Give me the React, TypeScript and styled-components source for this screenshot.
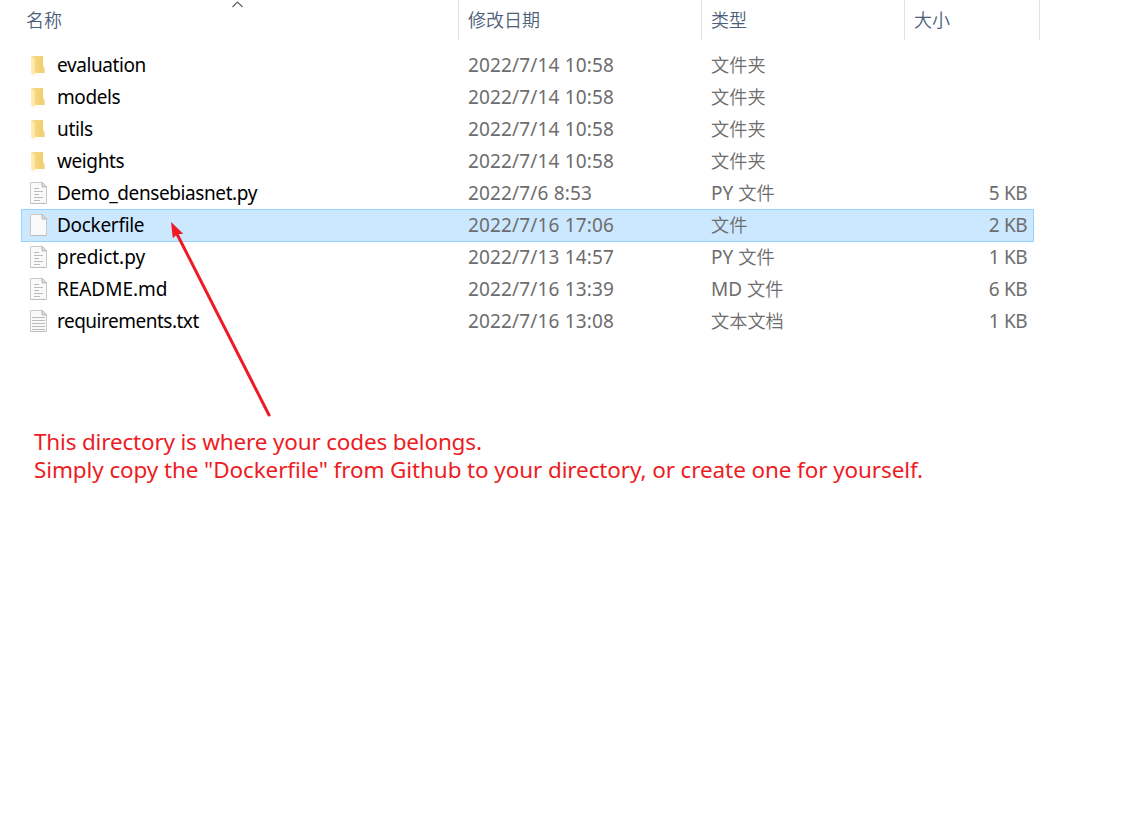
import React from "react";
import styled, { createGlobalStyle } from "styled-components";

const GlobalStyle = createGlobalStyle`
  body {
    margin: 0;
    background: #fff;
    overflow: hidden;
    font-family: "Noto Sans", "Noto Sans CJK SC", sans-serif;
  }
`;

const columns = "437px 243px 203px 135px";

const Page = styled.main`
  position: relative;
  height: 813px;
  padding-left: 21px;
`;

const HeaderRow = styled.div`
  position: relative;
  display: grid;
  grid-template-columns: ${columns};
  height: 40px;
`;

const HeaderCell = styled.div<{ $first?: boolean }>`
  box-sizing: border-box;
  border-right: 1px solid #e5e5e5;
  padding-left: ${(p) => (p.$first ? 5 : 10)}px;
  margin-right: -1px;
  color: #4c607a;
  font: 350 18px/39px "Noto Sans CJK SC", sans-serif;
`;

const SortMark = styled.svg`
  position: absolute;
  left: 210px;
  top: 0;
`;

const List = styled.div`
  margin-top: 9px;
`;

const Row = styled.div<{ $selected?: boolean }>`
  display: grid;
  grid-template-columns: ${columns};
  width: 1013px;
  height: ${(p) => (p.$selected ? 33 : 32)}px;
  margin-bottom: ${(p) => (p.$selected ? -1 : 0)}px;
  line-height: 32px;
  font-size: 19px;
  color: #6d6d6d;
  background: ${(p) => (p.$selected ? "#cce8ff" : "transparent")};
  box-shadow: ${(p) => (p.$selected ? "inset 0 0 0 1px #99d1ff" : "none")};
`;

const NameCell = styled.div`
  display: flex;
  height: 32px;
  padding-left: 9px;
  color: #000;
`;

const IconSlot = styled.span`
  display: flex;
  align-items: center;
  width: 27px;
`;

const Text = styled.span<{ $spacing?: number }>`
  line-height: 32px;
  white-space: pre;
  letter-spacing: ${(p) => p.$spacing ?? 0}px;
`;

const Cell = styled.div`
  display: flex;
  height: 32px;
  padding-left: 10px;
  white-space: pre;
`;

const Han = styled.span`
  font: 350 18.2px/31px "Noto Sans CJK SC", sans-serif;
`;

const SizeCell = styled.div`
  text-align: right;
  padding-right: 12px;
  letter-spacing: -0.6px;
  word-spacing: 0.8px;
`;

const Note = styled.div`
  margin: 91px 0 0 13px;
  color: #ed1c24;
  font-size: 22.5px;
  line-height: 28px;
`;

const NoteLine = styled.div<{ $spacing: number }>`
  height: 28px;
  white-space: pre;
  letter-spacing: ${(p) => p.$spacing}px;
`;

const Arrow = styled.svg`
  position: absolute;
  left: 160px;
  top: 210px;
`;

const Folder = () => (
  <svg width="18" height="22" viewBox="0 0 18 22">
    <defs>
      <linearGradient id="folderBack" x1="0" x2="1">
        <stop offset="0" stopColor="#f9de8d" />
        <stop offset="1" stopColor="#f0cc69" />
      </linearGradient>
      <linearGradient id="folderFlap" x1="0" x2="1">
        <stop offset="0" stopColor="#ffeeb8" />
        <stop offset="1" stopColor="#fde7a5" />
      </linearGradient>
    </defs>
    <path d="M1 2H13V12L14.5 14V19H1Z" fill="url(#folderBack)" />
    <path d="M1 2L5 5V19L4 22L1 19Z" fill="url(#folderFlap)" />
  </svg>
);

type SheetKind = "code" | "blank" | "text";

const rules: Record<SheetKind, string> = {
  blank: "",
  code: "M4 6.5H9M4 9.5H13M4 12.5H9M4 15.5H13M4 18.5H10",
  text: "M2 7.5H15M2 10.5H15M2 13.5H15M2 16.5H15M2 19.5H15",
};

const Sheet = ({ kind }: { kind: SheetKind }) => (
  <svg width="18" height="22" viewBox="0 0 18 22">
    <path d="M.5 .5H12L16.5 5V21.5H.5Z" fill="#f9f9f9" stroke="#cacaca" />
    <path d="M1 21.5H16" stroke="#bcbcbc" />
    <path d="M12 .5V5H16.5Z" fill="#e3e3e3" stroke="#a9a9a9" strokeWidth=".8" />
    {kind !== "blank" && <path d={rules[kind]} stroke="#b9bcbe" />}
  </svg>
);

interface Entry {
  name: string;
  spacing: number;
  date: string;
  prefix?: string;
  type: string;
  size?: string;
  kind: "folder" | SheetKind;
}

const entries: Entry[] = [
  { name: "evaluation", spacing: -0.4, date: "2022/7/14 10:58", type: "文件夹", kind: "folder" },
  { name: "models", spacing: -0.4, date: "2022/7/14 10:58", type: "文件夹", kind: "folder" },
  { name: "utils", spacing: -0.35, date: "2022/7/14 10:58", type: "文件夹", kind: "folder" },
  { name: "weights", spacing: -0.4, date: "2022/7/14 10:58", type: "文件夹", kind: "folder" },
  { name: "Demo_densebiasnet.py", spacing: -0.4, date: "2022/7/6 8:53", prefix: "PY ", type: "文件", size: "5 KB", kind: "code" },
  { name: "Dockerfile", spacing: -0.3, date: "2022/7/16 17:06", type: "文件", size: "2 KB", kind: "blank" },
  { name: "predict.py", spacing: -0.05, date: "2022/7/13 14:57", prefix: "PY ", type: "文件", size: "1 KB", kind: "code" },
  { name: "README.md", spacing: -0.05, date: "2022/7/16 13:39", prefix: "MD ", type: "文件", size: "6 KB", kind: "code" },
  { name: "requirements.txt", spacing: -0.5, date: "2022/7/16 13:08", type: "文本文档", size: "1 KB", kind: "text" },
];

export default function App() {
  return (
    <Page>
      <GlobalStyle />
      <HeaderRow>
        <HeaderCell $first>名称</HeaderCell>
        <HeaderCell>修改日期</HeaderCell>
        <HeaderCell>类型</HeaderCell>
        <HeaderCell>大小</HeaderCell>
        <SortMark width="13" height="9" fill="none" stroke="#5c5c5c" strokeWidth="1.1">
          <path d="M1.5 7L6.5 2L11.5 7" />
        </SortMark>
      </HeaderRow>
      <List>
        {entries.map((e) => (
          <Row key={e.name} $selected={e.name === "Dockerfile"}>
            <NameCell>
              <IconSlot>{e.kind === "folder" ? <Folder /> : <Sheet kind={e.kind} />}</IconSlot>
              <Text $spacing={e.spacing}>{e.name}</Text>
            </NameCell>
            <Cell>
              <Text $spacing={0.15}>{e.date}</Text>
            </Cell>
            <Cell>
              {e.prefix && <Text>{e.prefix}</Text>}
              <Han>{e.type}</Han>
            </Cell>
            <SizeCell>{e.size}</SizeCell>
          </Row>
        ))}
      </List>
      <Note>
        <NoteLine $spacing={-0.18}>This directory is where your codes belongs.</NoteLine>
        <NoteLine $spacing={-0.11}>Simply copy the "Dockerfile" from Github to your directory, or create one for yourself.</NoteLine>
      </Note>
      <Arrow width="120" height="215" viewBox="160 210 120 215">
        <path d="M177 234L269 415" stroke="#ed1c24" strokeWidth="3" strokeLinecap="round" />
        <path d="M171 222L183.3 233.7L177.2 234.2L172.8 238.3Z" fill="#ed1c24" />
      </Arrow>
    </Page>
  );
}
